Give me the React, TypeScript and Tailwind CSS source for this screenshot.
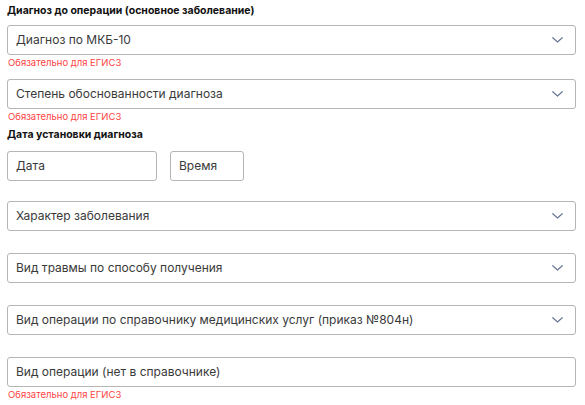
import React from "react";

const Chevron = () => (
  <svg width="11" height="6" viewBox="0 0 11 6" fill="none" className="shrink-0">
    <path d="M0.75 0.75L5.5 5L10.25 0.75" stroke="#6b7a99" strokeWidth="1.2" strokeLinecap="round" strokeLinejoin="round" />
  </svg>
);

const Select = ({ text, className = "" }: { text: string; className?: string }) => (
  <div className={`h-[30px] w-[569px] rounded-[3px] border border-[#b5b5b5] bg-white flex items-center justify-between pl-[8px] pr-[12px] ${className}`}>
    <span className="text-[12px] text-[#3a3a3a] leading-none">{text}</span>
    <Chevron />
  </div>
);

const Input = ({ text, className = "" }: { text: string; className?: string }) => (
  <div className={`h-[30px] rounded-[3px] border border-[#b5b5b5] bg-white flex items-center pl-[8px] ${className}`}>
    <span className="text-[12px] text-[#3a3a3a] leading-none">{text}</span>
  </div>
);

const Err = ({ className = "" }: { className?: string }) => (
  <div className={`text-[9.5px] leading-[14px] text-[#ff4444] pl-[1px] ${className}`}>Обязательно для ЕГИСЗ</div>
);

export default function App() {
  return (
    <div
      className="w-[585px] h-[405px] bg-white px-[7px] flex flex-col overflow-hidden"
      style={{ fontFamily: "Inter, 'Noto Sans', sans-serif" }}
    >
      <div className="mt-[4px] text-[10.5px] leading-[14px] font-bold text-[#111111]">
        Диагноз до операции (основное заболевание)
      </div>
      <Select text="Диагноз по МКБ-10" className="mt-[7px]" />
      <Err className="mt-[1px]" />
      <Select text="Степень обоснованности диагноза" className="mt-[9px]" />
      <Err className="mt-[1px]" />
      <div className="mt-[4px] text-[10.5px] leading-[14px] font-bold text-[#111111]">
        Дата установки диагноза
      </div>
      <div className="mt-[9px] flex gap-[13px]">
        <Input text="Дата" className="w-[150px]" />
        <Input text="Время" className="w-[74px]" />
      </div>
      <Select text="Характер заболевания" className="mt-[20px]" />
      <Select text="Вид травмы по способу получения" className="mt-[22px]" />
      <Select text="Вид операции по справочнику медицинских услуг (приказ №804н)" className="mt-[22px]" />
      <Input text="Вид операции (нет в справочнике)" className="mt-[22px] w-[569px]" />
      <Err className="mt-[1px]" />
    </div>
  );
}
